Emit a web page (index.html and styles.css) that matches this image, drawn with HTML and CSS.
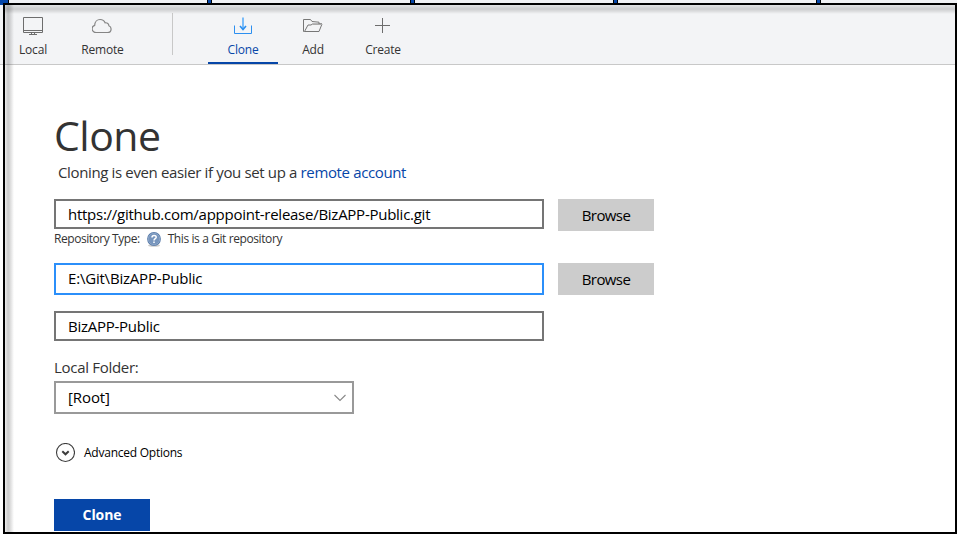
FILE: index.html
```html
<!DOCTYPE html>
<html lang="en">
<head>
<meta charset="utf-8">
<title>Clone</title>
<link rel="stylesheet" href="styles.css">
</head>
<body>
<div class="strip"><i class="cell first"></i><i class="cell"></i><i class="cell"></i><i class="cell"></i><i class="cell"></i></div>
<header class="toolbar">
  <nav class="tabs">
    <a class="tab local"><svg width="22" height="20" viewBox="0 0 22 20" fill="none" stroke="#6d6d6d"><path d="M1.500 1.500h19v15h-19zM1.500 14.500h19M9.500 16.500v2M12.500 16.500v2M7 18.500h8"/></svg><span>Local</span></a>
    <a class="tab remote"><svg width="22" height="20" viewBox="0 0 22 20" fill="none" stroke="#858585" stroke-width="1.200"><path d="M4.300 16.500c-2.300 0-4.200-1.500-4.200-3.700 0-2 1.200-3.100 2.600-3.500C2.800 5.800 5.100 3.500 8.100 3.500c2.500 0 4.200 1.200 5 3.300 2.300-.3 3.700 1 3.800 3 1.400.5 2.200 1.600 2.200 3.100 0 2.200-1.700 3.600-3.700 3.600z"/></svg><span>Remote</span></a>
    <i class="divider"></i>
    <a class="tab active"><svg width="22" height="20" viewBox="0 0 22 20" fill="none" stroke="#2b8ff0"><path d="M2.500 9.500v8h17v-8"/><path d="M11 1.500v12" stroke="#66b2f8" stroke-width="1.700"/><path d="M8 10l3 3.500 3-3.500" stroke-width="1.600"/></svg><span>Clone</span></a>
    <a class="tab"><svg width="22" height="20" viewBox="0 0 22 20" fill="none" stroke="#777"><path d="M2.500 15.500h14.500l3-7.500H17V6.200l-7-.7-1.500-2H1.500v12h1L6 9h3l1.500-1H20"/><path d="M10.500 8.500H20" stroke="#aaa"/></svg><span>Add</span></a>
    <a class="tab"><svg width="22" height="20" viewBox="0 0 22 20" fill="none" stroke="#6d6d6d"><path d="M10.500 2v15M3 9.500h15"/></svg><span>Create</span></a>
  </nav>
</header>
<main>
  <h1>Clone</h1>
  <p class="hint">Cloning is even easier if you set up a <a>remote account</a></p>
  <div class="row source"><div class="field">https://github.com/apppoint-release/BizAPP-Public.git</div><button>Browse</button></div>
  <div class="type"><span class="type-label">Repository Type:</span><svg width="16" height="16" viewBox="0 0 16 16"><ellipse cx="8" cy="14.500" rx="6" ry="1.300" fill="#ccc"/><circle cx="8" cy="8" r="6.900" fill="#5679a8"/><circle cx="8" cy="8" r="5.800" fill="#7795bd" stroke="#a3b8d3" stroke-width=".6"/><path d="M6 6.500c0-2.700 4.200-2.600 4.200-.3C10.200 7.700 8 7.700 8 9.500M8 10.600v1.500" fill="none" stroke="#fff" stroke-width="1.500"/></svg><span>This is a Git repository</span></div>
  <div class="row dest"><div class="field focus">E:\Git\BizAPP-Public</div><button>Browse</button></div>
  <div class="field name">BizAPP-Public</div>
  <div class="label">Local Folder:</div>
  <div class="select"><span>[Root]</span><svg width="12" height="8" viewBox="0 0 12 8" fill="none" stroke="#888" stroke-width="1.100"><path d="M.5 1L6 6.500 11.500 1"/></svg></div>
  <div class="advanced"><svg width="20" height="20" viewBox="0 0 20 20" fill="none" stroke="#3c3c3c"><circle cx="10.500" cy="9.500" r="9" stroke-width="1.100"/><path d="M7.300 8.300l3.200 3 3.200-3" stroke-width="2"/></svg><span>Advanced Options</span></div>
  <button class="primary">Clone</button>
</main>
<div class="frame"></div>
</body>
</html>
```
FILE: styles.css
```css
* { box-sizing: border-box; }
body { margin: 0; width: 957px; height: 534px; overflow: hidden; position: relative; background: #fff; color: #333; font-family: "Open Sans", "Noto Sans", sans-serif; font-size: 15px; }
svg { display: block; flex: none; }
.strip { display: flex; height: 5px; background: #f0f1f4; overflow: hidden; }
.cell { flex: none; width: 203px; height: 5px; background: linear-gradient(90deg, #000 1px, #0646a8 1px 4px, #000 4px 5px, transparent 5px); }
.cell.first { width: 207px; background: linear-gradient(90deg, #0646a8 8px, #000 8px 9px, transparent 9px); }
.toolbar { height: 60px; background: #f3f4f6; border-bottom: 1px solid #c8c8c8; }
.tabs { display: flex; height: 60px; }
.tab { width: 70px; height: 59px; display: flex; flex-direction: column; align-items: center; padding-top: 11px; font-size: 12px; }
.tab span { line-height: 16px; margin-top: 6px; letter-spacing: -.2px; white-space: nowrap; }
.local { width: 66px; }
.remote { width: 73px; }
.divider { width: 1px; height: 42px; margin: 8px 35px 0 33px; background: #c8c8c8; }
.active { color: #0646a8; border-bottom: 2px solid #0646a8; }
main { padding: 0 0 0 54px; display: flex; flex-direction: column; align-items: flex-start; }
h1 { margin: 42px 0 0; font-weight: 400; font-size: 41px; line-height: 56px; letter-spacing: -.5px; }
.hint { margin: -1px 0 0 4px; line-height: 20px; letter-spacing: -.36px; white-space: nowrap; }
.hint a { color: #0646a8; }
.row { display: flex; align-items: flex-start; }
.source { margin-top: 17px; height: 32px; }
.field { width: 490px; height: 30px; border: 2px solid #757575; padding: 0 12px; line-height: 27px; color: #000; letter-spacing: -.26px; }
.field.focus { height: 32px; border-color: #2b8ffa; line-height: 27px; letter-spacing: -.2px; }
button { width: 96px; height: 32px; margin: 0 0 0 14px; padding: 0; border: 0; background: #ccc; color: #000; font: 15px/33px "Open Sans", sans-serif; letter-spacing: -.6px; }
.type { display: flex; align-items: center; height: 16px; font-size: 12px; line-height: 14px; letter-spacing: -.4px; white-space: nowrap; }
.type-label { letter-spacing: -.45px; }
.type svg { margin: 0 6px; }
.dest { margin-top: 16px; }
.name { margin-top: 16px; }
.label { margin-top: 16px; line-height: 20px; letter-spacing: -.3px; }
.select { width: 300px; height: 33px; margin-top: 4px; border: 2px solid #999; padding: 0 6px 0 12px; display: flex; justify-content: space-between; align-items: center; color: #000; }
.select span { margin-top: -2px; letter-spacing: -.1px; }
.advanced { display: flex; align-items: center; height: 20px; margin: 29px 0 0 1px; font-size: 12px; color: #000; gap: 9px; letter-spacing: -.24px; }
.advanced span { margin-top: -2px; }
.primary { margin: 36px 0 0; background: #0646a8; color: #fff; font-size: 14px; line-height: 32px; font-weight: 700; letter-spacing: -.1px; }
.frame { position: absolute; left: 3px; top: 3px; width: 954px; height: 531px; border: 2px solid #000; background: linear-gradient(90deg, rgba(0,0,0,.07), rgba(0,0,0,.2) 3px, rgba(0,0,0,.15) 5px, transparent 9px), linear-gradient(rgba(0,0,0,.07), rgba(0,0,0,.16) 4px, rgba(0,0,0,.1) 6px, transparent 9px); }
```
